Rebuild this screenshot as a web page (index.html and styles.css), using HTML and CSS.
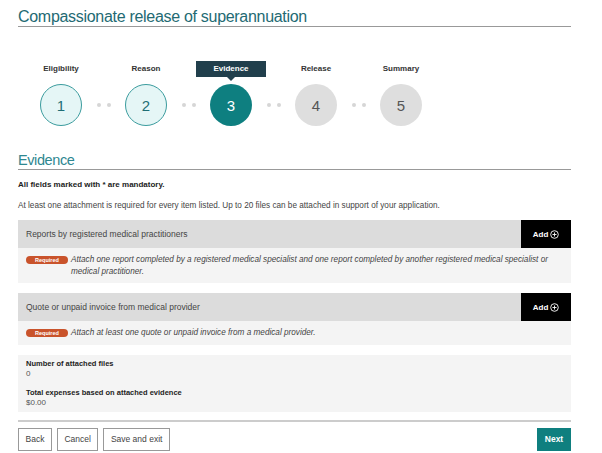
FILE: index.html
```html
<!DOCTYPE html>
<html lang="en">
<head>
    <meta charset="UTF-8">
    <meta name="viewport" content="width=device-width, initial-scale=1.0">
    <title>Compassionate release of superannuation</title>
    <link rel="stylesheet" href="styles.css">
</head>
<body>
    <div class="page">
        <h1 class="title">Compassionate release of superannuation</h1>

        <ol class="stepper">
            <li class="step done"><span class="step-label">Eligibility</span><span class="step-num">1</span></li>
            <li class="dots"><i></i><i></i></li>
            <li class="step done"><span class="step-label">Reason</span><span class="step-num">2</span></li>
            <li class="dots"><i></i><i></i></li>
            <li class="step current"><span class="step-label">Evidence</span><span class="step-num">3</span></li>
            <li class="dots"><i></i><i></i></li>
            <li class="step"><span class="step-label">Release</span><span class="step-num">4</span></li>
            <li class="dots"><i></i><i></i></li>
            <li class="step"><span class="step-label">Summary</span><span class="step-num">5</span></li>
        </ol>

        <h2 class="section-title">Evidence</h2>
        <p class="mandatory">All fields marked with * are mandatory.</p>
        <p class="intro">At least one attachment is required for every item listed. Up to 20 files can be attached in support of your application.</p>

        <div class="item">
            <div class="item-bar">
                <span class="item-name">Reports by registered medical practitioners</span>
                <button class="add-btn" type="button">Add
                    <svg width="8" height="8" viewBox="0 0 8 8"><circle cx="4" cy="4" r="3.4" fill="none" stroke="#fff" stroke-width="0.8"/><path d="M4 2.2v3.6M2.2 4h3.6" stroke="#fff" stroke-width="0.8"/></svg>
                </button>
            </div>
            <div class="item-note">
                <span class="badge">Required</span>
                <p>Attach one report completed by a registered medical specialist and one report completed by another registered medical specialist or medical practitioner.</p>
            </div>
        </div>

        <div class="item">
            <div class="item-bar">
                <span class="item-name">Quote or unpaid invoice from medical provider</span>
                <button class="add-btn" type="button">Add
                    <svg width="8" height="8" viewBox="0 0 8 8"><circle cx="4" cy="4" r="3.4" fill="none" stroke="#fff" stroke-width="0.8"/><path d="M4 2.2v3.6M2.2 4h3.6" stroke="#fff" stroke-width="0.8"/></svg>
                </button>
            </div>
            <div class="item-note">
                <span class="badge">Required</span>
                <p>Attach at least one quote or unpaid invoice from a medical provider.</p>
            </div>
        </div>

        <dl class="totals">
            <dt>Number of attached files</dt>
            <dd>0</dd>
            <dt>Total expenses based on attached evidence</dt>
            <dd>$0.00</dd>
        </dl>

        <div class="actions">
            <button class="btn" type="button">Back</button>
            <button class="btn" type="button">Cancel</button>
            <button class="btn" type="button">Save and exit</button>
            <button class="btn btn-primary" type="button">Next</button>
        </div>
    </div>
</body>
</html>
```
FILE: styles.css
```css
body { margin: 0; font-family: "Liberation Sans", Arial, Helvetica, sans-serif; color: #333; background: #fff; }
.page { margin: 0 31px 0 18px; }
p { margin: 0; }

.title { margin: 8px 0 0; font-size: 16px; line-height: 18px; font-weight: normal; letter-spacing: -0.3px; color: #236a73; border-bottom: 1px solid #999; }

.stepper { list-style: none; margin: 34px 0 0; padding: 0 0 0 22px; display: flex; align-items: flex-end; }
.step { width: 42px; display: flex; flex-direction: column; align-items: center; }
.step-label { position: relative; font-size: 8px; line-height: 16px; font-weight: bold; color: #333; white-space: nowrap; margin-bottom: 7px; }
.step-num { width: 42px; height: 42px; box-sizing: border-box; border-radius: 50%; background: #dedede; color: #555; font-size: 15px; display: flex; align-items: center; justify-content: center; }
.step.done .step-num { background: #e5f6f6; border: 1.5px solid #3b9c9e; color: #1f6e75; }
.step.current .step-num { background: #0e7f80; color: #fff; }
.step.current .step-label { background: #213f4c; color: #fff; width: 70px; text-align: center; }
.step.current .step-label::after { content: ""; position: absolute; left: 50%; bottom: -4px; margin-left: -4px; border: 4px solid transparent; border-bottom: 0; border-top-color: #213f4c; }
.dots { width: 43px; height: 42px; display: flex; align-items: center; justify-content: center; gap: 6px; }
.dots i { width: 4px; height: 4px; border-radius: 50%; background: #d6d6d6; }

.section-title { margin: 25px 0 0; font-size: 14.5px; line-height: 18px; font-weight: normal; letter-spacing: -0.4px; color: #2e8790; border-bottom: 1px solid #999; }
.mandatory { margin-top: 9px; font-size: 8px; line-height: 11px; font-weight: bold; color: #222; }
.intro { margin-top: 10px; font-size: 8.2px; line-height: 11px; color: #444; }

.item { margin-top: 9px; }
.item + .item { margin-top: 10px; }
.item-bar { display: flex; height: 28px; background: #dcdcdc; }
.item-name { flex: 1; padding-left: 8px; font-size: 8.5px; line-height: 28px; color: #444; }
.add-btn { width: 50px; border: 0; background: #000; color: #fff; font-family: inherit; font-size: 8px; font-weight: bold; display: flex; align-items: center; justify-content: center; gap: 2px; padding: 0; }
.add-btn svg { width: 9px; height: 9px; }
.item-note { display: flex; align-items: flex-start; gap: 3px; padding: 6px 18px 6px 8px; background: #f4f4f4; }
.badge { flex: none; width: 42px; height: 8px; margin-top: 1.5px; border-radius: 5px; background: #c9532b; color: #fff; font-size: 5.5px; line-height: 8px; font-weight: bold; text-align: center; }
.item-note p { font-size: 8.2px; line-height: 11.5px; font-style: italic; color: #444; }

.totals { margin: 10px 0 0; padding: 4px 8px; background: #f4f4f4; font-size: 8px; line-height: 10px; }
.totals dt { font-weight: bold; color: #222; font-size: 7.5px; }
.totals dd { margin: 0 0 9px; color: #555; }
.totals dd:last-child { margin-bottom: 0; }

.actions { margin-top: 8px; padding-top: 6px; border-top: 2px solid #ccc; display: flex; gap: 5px; }
.btn { height: 23px; padding: 0 6.5px; border: 1px solid #999; background: #fff; color: #444; font-family: inherit; font-size: 8.5px; }
.btn-primary { margin-left: auto; width: 34px; padding: 0; border: 0; background: #0f7f7f; color: #fff; font-weight: bold; }
```
